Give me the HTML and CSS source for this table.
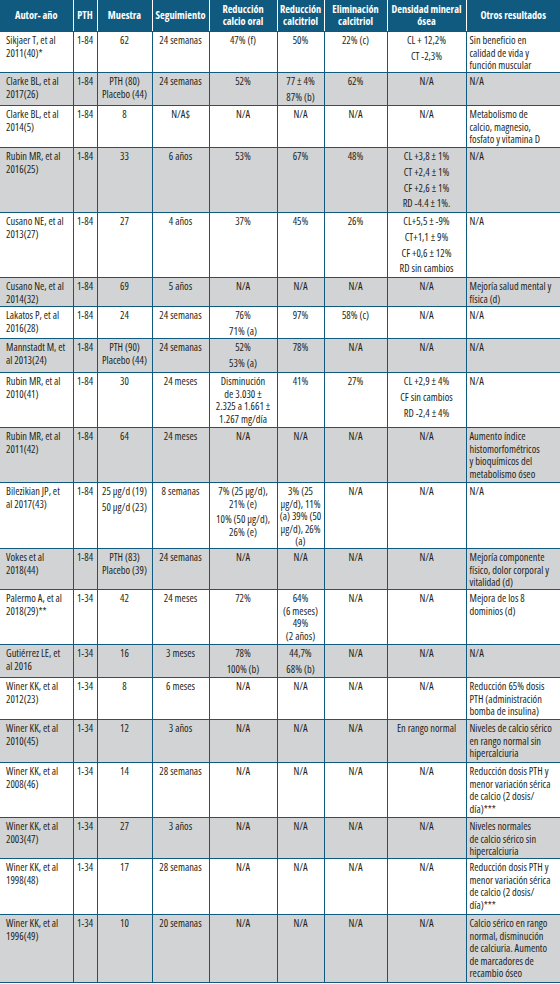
FILE: index.html
```html
<!DOCTYPE html>
<html lang="es">
<head>
<meta charset="utf-8">
<title>Tabla PTH</title>
<link rel="stylesheet" href="styles.css">
</head>
<body>
<table class="tbl">
<colgroup>
<col class="w-autor"><col class="w-pth"><col class="w-muestra"><col class="w-seg"><col class="w-oral"><col class="w-ctr"><col class="w-elim"><col class="w-dens"><col class="w-otros">
</colgroup>
<thead>
<tr>
<th>Autor- año</th>
<th>PTH</th>
<th>Muestra</th>
<th>Seguimiento</th>
<th>Reducción<br>calcio oral</th>
<th>Reducción<br>calcitriol</th>
<th>Eliminación<br>calcitriol</th>
<th>Densidad mineral<br>ósea</th>
<th>Otros resultados</th>
</tr>
</thead>
<tbody>
<tr class="h41">
<td class="a">Sikjaer T, et al<br>2011(40)*</td><td>1-84</td><td>62</td><td>24 semanas</td><td>47% (f)</td><td>50%</td><td>22% (c)</td>
<td><div class="p">CL + 12,2%</div><div class="p">CT -2,3%</div></td>
<td class="o">Sin beneficio en<br>calidad de vida y<br>función muscular</td>
</tr>
<tr class="h33">
<td class="a">Clarke BL, et al<br>2017(26)</td><td>1-84</td><td>PTH (80)<br>Placebo (44)</td><td>24 semanas</td><td>52%</td>
<td><div class="p">77 ± 4%</div><div class="p">87% (b)</div></td><td>62%</td><td>N/A</td><td class="o">N/A</td>
</tr>
<tr class="h42">
<td class="a">Clarke BL, et al<br>2014(5)</td><td>1-84</td><td>8</td><td>N/A$</td><td>N/A</td><td>N/A</td><td>N/A</td><td>N/A</td>
<td class="o">Metabolismo de<br>calcio, magnesio,<br>fosfato y vitamina D</td>
</tr>
<tr class="h65">
<td class="a">Rubin MR, et al<br>2016(25)</td><td>1-84</td><td>33</td><td>6 años</td><td>53%</td><td>67%</td><td>48%</td>
<td><div class="p">CL +3,8 ± 1%</div><div class="p">CT +2,4 ± 1%</div><div class="p">CF +2,6 ± 1%</div><div class="p">RD -4.4 ± 1%.</div></td>
<td class="o">N/A</td>
</tr>
<tr class="h65">
<td class="a">Cusano NE, et al<br>2013(27)</td><td>1-84</td><td>27</td><td>4 años</td><td>37%</td><td>45%</td><td>26%</td>
<td><div class="p">CL+5,5 ± -9%</div><div class="p">CT+1,1 ± 9%</div><div class="p">CF +0,6 ± 12%</div><div class="p">RD sin cambios</div></td>
<td class="o">N/A</td>
</tr>
<tr class="h29">
<td class="a">Cusano Ne, et al<br>2014(32)</td><td>1-84</td><td>69</td><td>5 años</td><td>N/A</td><td>N/A</td><td>N/A</td><td>N/A</td>
<td class="o">Mejoría salud mental y<br>física (d)</td>
</tr>
<tr class="h32">
<td class="a">Lakatos P, et al<br>2016(28)</td><td>1-84</td><td>24</td><td>24 semanas</td>
<td><div class="p">76%</div><div class="p">71% (a)</div></td><td>97%</td><td>58% (c)</td><td>N/A</td><td class="o">N/A</td>
</tr>
<tr class="h34">
<td class="a">Mannstadt M, et<br>al 2013(24)</td><td>1-84</td><td>PTH (90)<br>Placebo (44)</td><td>24 semanas</td>
<td><div class="p">52%</div><div class="p">53% (a)</div></td><td>78%</td><td>N/A</td><td>N/A</td><td class="o">N/A</td>
</tr>
<tr class="h55">
<td class="a">Rubin MR, et al<br>2010(41)</td><td>1-84</td><td>30</td><td>24 meses</td>
<td>Disminución<br>de 3.030 ±<br>2.325 a 1.661 ±<br>1.267 mg/día</td><td>41%</td><td>27%</td>
<td><div class="p">CL +2,9 ± 4%</div><div class="p">CF sin cambios</div><div class="p">RD -2,4 ± 4%</div></td>
<td class="o">N/A</td>
</tr>
<tr class="h55">
<td class="a">Rubin MR, et al<br>2011(42)</td><td>1-84</td><td>64</td><td>24 meses</td><td>N/A</td><td>N/A</td><td>N/A</td><td>N/A</td>
<td class="o">Aumento índice<br>histomorfométricos<br>y bioquímicos del<br>metabolismo óseo</td>
</tr>
<tr class="h66">
<td class="a">Bilezikian JP, et<br>al 2017(43)</td><td>1-84</td>
<td><div class="p">25 µg/d (19)</div><div class="p">50 µg/d (23)</div></td><td>8 semanas</td>
<td><div class="p">7% (25 µg/d),<br>21% (e)</div><div class="p">10% (50 µg/d),<br>26% (e)</div></td>
<td>3% (25<br>µg/d), 11%<br>(a) 39% (50<br>µg/d), 26%<br>(a)</td><td>N/A</td><td>N/A</td><td class="o">N/A</td>
</tr>
<tr class="h41">
<td class="a">Vokes et al<br>2018(44)</td><td>1-84</td><td>PTH (83)<br>Placebo (39)</td><td>24 semanas</td><td>N/A</td><td>N/A</td><td>N/A</td><td>N/A</td>
<td class="o">Mejoría componente<br>físico, dolor corporal y<br>vitalidad (d)</td>
</tr>
<tr class="h55">
<td class="a">Palermo A, et al<br>2018(29)**</td><td>1-34</td><td>42</td><td>24 meses</td><td>72%</td>
<td>64%<br>(6 meses)<br>49%<br>(2 años)</td><td>N/A</td><td>N/A</td>
<td class="o">Mejora de los 8<br>dominios (d)</td>
</tr>
<tr class="h33">
<td class="a">Gutiérrez LE, et<br>al 2016</td><td>1-34</td><td>16</td><td>3 meses</td>
<td><div class="p">78%</div><div class="p">100% (b)</div></td>
<td><div class="p">44,7%</div><div class="p">68% (b)</div></td><td>N/A</td><td>N/A</td><td class="o">N/A</td>
</tr>
<tr class="h42">
<td class="a">Winer KK, et al<br>2012(23)</td><td>1-34</td><td>8</td><td>6 meses</td><td>N/A</td><td>N/A</td><td>N/A</td><td>N/A</td>
<td class="o">Reducción 65% dosis<br>PTH (administración<br>bomba de insulina)</td>
</tr>
<tr class="h43">
<td class="a">Winer KK, et al<br>2010(45)</td><td>1-34</td><td>12</td><td>3 años</td><td>N/A</td><td>N/A</td><td>N/A</td><td>En rango normal</td>
<td class="o">Niveles de calcio sérico<br>en rango normal sin<br>hipercalciuria</td>
</tr>
<tr class="h55">
<td class="a">Winer KK, et al<br>2008(46)</td><td>1-34</td><td>14</td><td>28 semanas</td><td>N/A</td><td>N/A</td><td>N/A</td><td>N/A</td>
<td class="o">Reducción dosis PTH y<br>menor variación sérica<br>de calcio (2 dosis/<br>día)***</td>
</tr>
<tr class="h40">
<td class="a">Winer KK, et al<br>2003(47)</td><td>1-34</td><td>27</td><td>3 años</td><td>N/A</td><td>N/A</td><td>N/A</td><td>N/A</td>
<td class="o">Niveles normales<br>de calcio sérico sin<br>hipercalciuria</td>
</tr>
<tr class="h56">
<td class="a">Winer KK, et al<br>1998(48)</td><td>1-34</td><td>17</td><td>28 semanas</td><td>N/A</td><td>N/A</td><td>N/A</td><td>N/A</td>
<td class="o">Reducción dosis PTH y<br>menor variación sérica<br>de calcio (2 dosis/<br>día)***</td>
</tr>
<tr class="h68">
<td class="a">Winer KK, et al<br>1996(49)</td><td>1-34</td><td>10</td><td>20 semanas</td><td>N/A</td><td>N/A</td><td>N/A</td><td>N/A</td>
<td class="o">Calcio sérico en rango<br>normal, disminución<br>de calciuria. Aumento<br>de marcadores de<br>recambio óseo</td>
</tr>
</tbody>
</table>
</body>
</html>
```

FILE: styles.css
```css
html, body {
  margin: 0;
  padding: 0;
  background: #ffffff;
}

body {
  font-family: "Liberation Sans Narrow", "Open Sans", "DejaVu Sans Condensed", sans-serif;
  font-stretch: condensed;
  font-size: 10.4px;
  line-height: 12.5px;
  color: #231f20;
}

.tbl {
  width: 560px;
  border-collapse: collapse;
  table-layout: fixed;
  border-bottom: 1px solid #0f5a7e;
}

.w-autor { width: 73px; }
.w-pth { width: 24px; }
.w-muestra { width: 55px; }
.w-seg { width: 57px; }
.w-oral { width: 68px; }
.w-ctr { width: 47px; }
.w-elim { width: 63px; }
.w-dens { width: 79px; }
.w-otros { width: 94px; }

.tbl thead tr { height: 31px; }

.tbl th {
  background: #0f5a7e;
  color: #ffffff;
  font-size: 10.3px;
  font-weight: bold;
  line-height: 12.4px;
  padding: 0 1px;
  text-align: center;
  vertical-align: middle;
  white-space: nowrap;
  border-left: 1px solid #ffffff;
  border-right: 1px solid #ffffff;
  border-bottom: 1px solid #0f5a7e;
}

.tbl th:first-child { border-left: none; }
.tbl th:last-child { border-right: none; }

.tbl td {
  padding: 2.5px 1px 0;
  text-align: center;
  vertical-align: top;
  white-space: nowrap;
  border: 1px solid #0f5a7e;
}

.tbl td:first-child { border-left: none; }
.tbl td:last-child { border-right: none; }

.tbl tbody tr:nth-child(even) td {
  background: #d1d3d4;
}

.tbl td.a {
  text-align: left;
  padding-left: 6px;
}

.tbl td.o {
  text-align: left;
  padding-left: 3px;
  padding-right: 0;
}

.p + .p {
  margin-top: 3.3px;
}

.h29 { height: 29px; }
.h32 { height: 32px; }
.h33 { height: 33px; }
.h34 { height: 34px; }
.h40 { height: 40px; }
.h41 { height: 41px; }
.h42 { height: 42px; }
.h43 { height: 43px; }
.h55 { height: 55px; }
.h56 { height: 56px; }
.h65 { height: 65px; }
.h66 { height: 66px; }
.h68 { height: 68px; }
```
